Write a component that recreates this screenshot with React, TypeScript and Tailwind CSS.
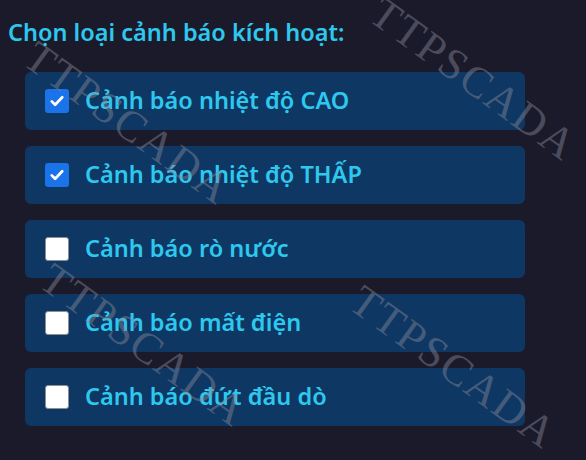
import React from 'react';

const ALERTS = [
  { label: 'Cảnh báo nhiệt độ CAO', checked: true },
  { label: 'Cảnh báo nhiệt độ THẤP', checked: true },
  { label: 'Cảnh báo rò nước', checked: false },
  { label: 'Cảnh báo mất điện', checked: false },
  { label: 'Cảnh báo đứt đầu dò', checked: false },
];

// watermark positions (overlay)
const MARKS = [
  { left: 29, top: 30 },
  { left: 375, top: -14 },
  { left: 45, top: 252 },
  { left: 355, top: 274 },
];

const Box: React.FC<{ checked: boolean }> = ({ checked }) =>
  checked ? (
    <span className="w-6 h-6 rounded-[3px] bg-[#1a73e8] flex items-center justify-center shrink-0">
      <svg viewBox="0 0 24 24" className="w-[18px] h-[18px]" fill="none" stroke="white" strokeWidth="3.6" strokeLinecap="round" strokeLinejoin="round">
        <path d="M5 12.5l4.5 4.5L19 7" />
      </svg>
    </span>
  ) : (
    <span className="w-6 h-6 rounded-[3px] bg-white border border-[#8a8f98] shrink-0" />
  );

export default function App() {
  const [items, setItems] = React.useState(ALERTS);

  return (
    <div
      className="relative w-[586px] h-[460px] bg-[#1a1a2b] overflow-hidden select-none"
      style={{ fontFamily: '"Noto Sans", "Open Sans", sans-serif' }}
    >
      <div className="pt-[17px] pl-[8px] text-[23.5px] font-semibold text-[#2ec8ef] leading-[30px]">
        Chọn loại cảnh báo kích hoạt:
      </div>

      <div className="flex flex-col gap-[16px] pl-[25px] pt-[25px] w-[525px]">
        {items.map((it, i) => (
          <label
            key={it.label}
            onClick={() => setItems(items.map((x, j) => (j === i ? { ...x, checked: !x.checked } : x)))}
            className="h-[58px] rounded-[6px] bg-[#0e3763] flex items-center gap-[16px] pl-[20px] cursor-pointer"
          >
            <Box checked={it.checked} />
            <span className="text-[23.5px] font-semibold text-[#2ec8ef] leading-none">{it.label}</span>
          </label>
        ))}
      </div>

      {/* Watermarks */}
      {MARKS.map((m, i) => (
        <div
          key={i}
          className="absolute pointer-events-none text-[44px] tracking-[2px] text-[#8a8a99]/45 origin-left"
          style={{
            left: m.left,
            top: m.top,
            transform: 'rotate(36deg)',
            fontFamily: '"Liberation Serif", "DejaVu Serif", serif',
            lineHeight: 1,
          }}
        >
          TTPSCADA
        </div>
      ))}
    </div>
  );
}
